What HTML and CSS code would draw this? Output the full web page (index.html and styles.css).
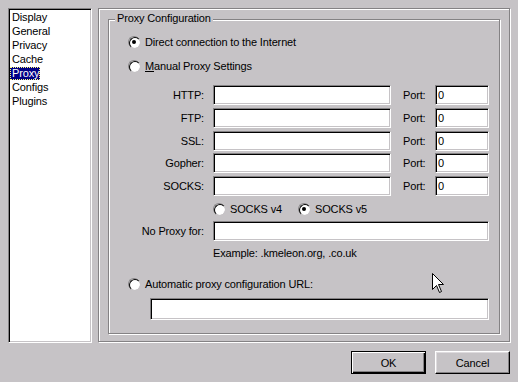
FILE: index.html
```html
<!DOCTYPE html>
<html>
<head>
<meta charset="utf-8">
<title>Preferences - Proxy</title>
<link rel="stylesheet" href="styles.css">
</head>
<body>
<div class="dialog">
  <div class="top">
    <ul class="list">
      <li><span class="item">Display</span></li>
      <li><span class="item">General</span></li>
      <li><span class="item">Privacy</span></li>
      <li><span class="item">Cache</span></li>
      <li><span class="item selected">Proxy</span></li>
      <li><span class="item">Configs</span></li>
      <li><span class="item">Plugins</span></li>
    </ul>
    <div class="panel">
      <div class="group">
        <span class="legend">Proxy Configuration</span>
        <div class="opt opt-direct"><span class="radio checked"></span><span>Direct connection to the Internet</span></div>
        <div class="opt opt-manual"><span class="radio"></span><span><u>M</u>anual Proxy Settings</span></div>
        <div class="fields">
          <div class="field"><span class="lbl">HTTP:</span><input class="input host" type="text" value=""><span class="port-lbl">Port:</span><input class="input port" type="text" value="0"></div>
          <div class="field"><span class="lbl">FTP:</span><input class="input host" type="text" value=""><span class="port-lbl">Port:</span><input class="input port" type="text" value="0"></div>
          <div class="field"><span class="lbl">SSL:</span><input class="input host" type="text" value=""><span class="port-lbl">Port:</span><input class="input port" type="text" value="0"></div>
          <div class="field"><span class="lbl">Gopher:</span><input class="input host" type="text" value=""><span class="port-lbl">Port:</span><input class="input port" type="text" value="0"></div>
          <div class="field"><span class="lbl">SOCKS:</span><input class="input host" type="text" value=""><span class="port-lbl">Port:</span><input class="input port" type="text" value="0"></div>
        </div>
        <div class="socks">
          <span class="opt v4"><span class="radio"></span><span>SOCKS v4</span></span>
          <span class="opt"><span class="radio checked"></span><span>SOCKS v5</span></span>
        </div>
        <div class="field noproxy"><span class="lbl">No Proxy for:</span><input class="input wide" type="text" value=""></div>
        <div class="example">Example: .kmeleon.org, .co.uk</div>
        <div class="opt opt-auto"><span class="radio"></span><span>Automatic proxy configuration URL:</span></div>
        <input class="input url" type="text" value="">
      </div>
    </div>
  </div>
  <div class="buttons">
    <div class="btn default">OK</div>
    <div class="btn">Cancel</div>
  </div>
</div>
<svg class="cursor" width="13" height="21" viewBox="0 0 13 21">
  <path d="M0.5 0.5 L0.5 16.5 L4.5 12.5 L7.5 19.5 L9.5 18.5 L6.5 11.5 L11.5 11.5 Z" fill="#fff" stroke="#000" stroke-width="1" stroke-linejoin="miter"/>
</svg>
</body>
</html>
```
FILE: styles.css
```css
* { box-sizing: border-box; }
html, body { margin: 0; padding: 0; }
body {
  width: 518px;
  height: 382px;
  background: #c6c3c6;
  font-family: "Liberation Sans", Arial, sans-serif;
  font-size: 11px;
  letter-spacing: -0.15px;
  color: #000;
  overflow: hidden;
  position: relative;
}
.dialog {
  padding: 8px 7px 8px 8px;
  display: flex;
  flex-direction: column;
  gap: 8px;
}
.top {
  display: flex;
  gap: 6px;
  height: 335px;
}
.list {
  margin: 0;
  padding: 2px 0 0 1px;
  list-style: none;
  width: 84px;
  height: 335px;
  background: #fff;
  border: 1px solid;
  border-color: #848284 #fff #fff #848284;
  box-shadow: inset 1px 1px 0 #000, inset -1px -1px 0 #c6c3c6;
}
.list li {
  display: block;
  height: 14px;
}
.item {
  display: inline-block;
  vertical-align: top;
  height: 13px;
  line-height: 13px;
  padding: 0 1px 0 2px;
}
.item.selected {
  background: #000084;
  color: #fff;
  outline: 1px dotted #ffff7b;
  outline-offset: -1px;
}
.panel {
  width: 412px;
  height: 334px;
  border: 1px solid #848284;
  box-shadow: inset 1px 1px 0 #fff, 1px 1px 0 #fff;
  padding: 10px 0 0 9px;
}
.group {
  position: relative;
  width: 392px;
  height: 315px;
  border: 1px solid #848284;
  box-shadow: inset 1px 1px 0 #fff, 1px 1px 0 #fff;
}
.legend {
  position: absolute;
  left: 6px;
  top: -8px;
  padding: 0 2px;
  height: 13px;
  line-height: 13px;
  background: #c6c3c6;
  white-space: nowrap;
}
.opt {
  display: flex;
  align-items: center;
  gap: 5px;
  height: 12px;
  white-space: nowrap;
}
.opt-direct { margin: 16px 0 0 19px; }
.opt-manual { margin: 12px 0 0 19px; }
.opt-auto { margin: 19px 0 0 19px; }
.radio {
  flex: none;
  position: relative;
  width: 12px;
  height: 12px;
  border-radius: 50%;
  border: 1px solid;
  border-color: #848284 #fff #fff #848284;
  background: #fff;
}
.radio::before {
  content: "";
  position: absolute;
  left: 0; top: 0;
  width: 10px;
  height: 10px;
  border-radius: 50%;
  border: 1px solid;
  border-color: #000 #c6c3c6 #c6c3c6 #000;
}
.radio.checked::after {
  content: "";
  position: absolute;
  left: 3px; top: 3px;
  width: 4px;
  height: 4px;
  border-radius: 50%;
  background: #000;
}
.fields {
  margin-top: 13px;
  display: flex;
  flex-direction: column;
  gap: 2.75px;
}
.field {
  display: flex;
  align-items: center;
  height: 20px;
}
.lbl {
  width: 95px;
  margin-right: 9px;
  text-align: right;
  white-space: nowrap;
}
.port-lbl {
  width: 32px;
  margin-left: 12px;
}
.input {
  -webkit-appearance: none;
  appearance: none;
  display: block;
  height: 20px;
  margin: 0;
  padding: 0 0 0 2px;
  background: #fff;
  border: 1px solid;
  border-color: #848284 #fff #fff #848284;
  box-shadow: inset 1px 1px 0 #000, inset -1px -1px 0 #c6c3c6;
  font: inherit;
  color: #000;
  outline: none;
  border-radius: 0;
}
.host { width: 178px; }
.port { width: 54px; }
.socks {
  margin: 7px 0 0 104px;
  display: flex;
  height: 12px;
}
.socks .v4 { width: 85px; }
.noproxy { margin-top: 6px; }
.wide { width: 276px; }
.example {
  margin: 6px 0 0 104px;
  height: 12px;
  line-height: 12px;
}
.url {
  margin: 8px 0 0 41px;
  width: 339px;
  height: 22px;
}
.buttons {
  display: flex;
  justify-content: flex-end;
  gap: 9px;
  padding-right: 1px;
}
.btn {
  width: 75px;
  height: 23px;
  display: flex;
  align-items: center;
  justify-content: center;
  border: 1px solid;
  border-color: #fff #000 #000 #fff;
  box-shadow: inset -1px -1px 0 #848284, inset 1px 1px 0 #dedbde;
}
.btn.default {
  border-color: #000;
  box-shadow: inset 1px 1px 0 #fff, inset -1px -1px 0 #000, inset -2px -2px 0 #848284;
}
.cursor {
  position: absolute;
  left: 432px;
  top: 273px;
}
```
